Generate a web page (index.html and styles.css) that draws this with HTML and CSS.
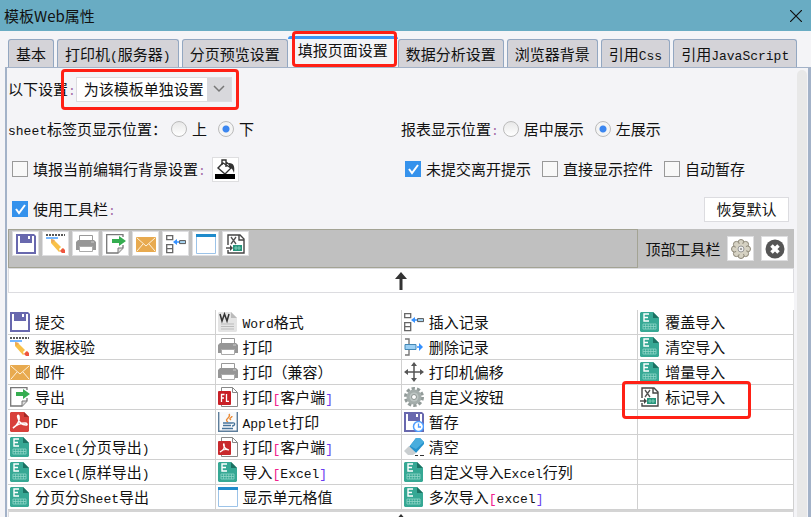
FILE: index.html
```html
<!DOCTYPE html>
<html lang="zh-CN">
<head>
    <meta charset="UTF-8">
    <meta name="viewport" content="width=device-width, initial-scale=1.0">
    <title>模板Web属性</title>
    <link rel="stylesheet" href="styles.css">
</head>
<body>
    <!-- icon sprite -->
    <svg class="sprite" aria-hidden="true">
        <symbol id="i-save" viewBox="0 0 20 20">
            <path d="M0 0h18l2 2v18H0z" fill="#6868ae"/>
            <path d="M2 2h2v7h12V2h2v16H2z" fill="#fff"/>
            <path d="M4 0h12v8H4z" fill="#6868ae"/>
            <path d="M12 2h2v3h-2z" fill="#fff"/>
        </symbol>
        <symbol id="i-check" viewBox="0 0 20 20">
            <path d="M0 1h19" stroke="#222" stroke-width="1.5" stroke-dasharray="2 1"/>
            <path d="M0 4h12" stroke="#4aa0ff" stroke-width="1.5"/>
            <path d="M5 5l3 1 9 9-4 3-8-9z" fill="#f9c148"/>
            <path d="M5 5l4 1-3 3z" fill="#eaa65d"/>
            <path d="M13 15l3-3 1 1-3 4z" fill="#fff"/>
            <path d="M14 17l3-3 2 2v3h-3z" fill="#ee5540"/>
        </symbol>
        <symbol id="i-print" viewBox="0 0 20 20">
            <path d="M3.5 7V1.500h13V7" fill="#fff" stroke="#999"/>
            <path d="M2 6h16l2 2v8H0V8z" fill="#969696"/>
            <path d="M3.500 12.500h13v5h-13z" fill="#fff" stroke="#aaa"/>
            <path d="M15 8h3" stroke="#ccc"/>
        </symbol>
        <symbol id="i-export" viewBox="0 0 20 20">
            <path d="M17 11v3l-5 5H.7V.7H17V3" fill="#fff" stroke="#777" stroke-width="1.300"/>
            <path d="M12 19v-5h5" fill="#ddd" stroke="#777"/>
            <path d="M6 5h7V2l7 5-7 5V9H6z" fill="#35ad50"/>
        </symbol>
        <symbol id="i-mail" viewBox="0 0 20 20">
            <rect y="3" width="20" height="15" rx="1" fill="#e8aa4f"/>
            <path d="M1 4l9 8 9-8M1 17l6-7M19 17l-6-7" fill="none" stroke="#fff2dc"/>
        </symbol>
        <symbol id="i-insert" viewBox="0 0 20 20">
            <path d="M.7 1.700h6v4h-6zM.7 10.700h6v8h-6zM1 14.700h6" fill="#fff" stroke="#666" stroke-width="1.300"/>
            <path d="M13.600 6.600h6v3h-6z" fill="#a9d7f5" stroke="#555"/>
            <path d="M13 8H9" stroke="#3390ff" stroke-width="1.500"/>
            <path d="M7 8l4-3v6z" fill="#3390ff"/>
        </symbol>
        <symbol id="i-delete" viewBox="0 0 20 20">
            <path d="M1 2h4v16H1" fill="none" stroke="#777" stroke-width="1.400"/>
            <path d="M1 7.500h11v5H1z" fill="#9bd0f5" stroke="#4488b5"/>
            <path d="M13 10h4" stroke="#3390ff" stroke-width="1.500"/>
            <path d="M15 6l4 4-4 4z" fill="#3390ff"/>
        </symbol>
        <symbol id="i-window" viewBox="0 0 20 20">
            <path d="M.5.5h19v19H.5z" fill="#fff" stroke="#9cc3e8"/>
            <path d="M0 0h20v3H0z" fill="#1f8bcb"/>
        </symbol>
        <symbol id="i-mark" viewBox="0 0 20 20">
            <path d="M2 11V1h12l4 4v14H2v-3" fill="#fff" stroke="#444" stroke-width="1.400"/>
            <path d="M13 1v5h5" fill="none" stroke="#444" stroke-width="1.400"/>
            <path d="M5 3l5 7M10 3l-5 7" stroke="#555" stroke-width="1.300"/>
            <path d="M0 14h5" stroke="#444" stroke-width="1.400"/>
            <path d="M4 11l3 3-3 3z" fill="#444"/>
            <path d="M7 11h9v6H7z" fill="#27947c"/>
            <path d="M8 14h7M10 12v4M13 12v4" stroke="#9adcc9" stroke-width=".7"/>
        </symbol>
        <symbol id="i-pdf" viewBox="0 0 20 20">
            <path d="M1 0h13l5 5v14l-1 1H1l-1-1V1z" fill="#d8403b"/>
            <path d="M14 0l5 5h-5z" fill="#a32a27"/>
            <path d="M3 16c5-3 7-8 6-12-1-2-2 0-1 2 1 4 4 7 8 7 2 0 1-2-1-2-5 0-9 2-12 5z" fill="none" stroke="#fff" stroke-width="1.500"/>
        </symbol>
        <symbol id="i-excel" viewBox="0 0 20 20">
            <path d="M1 0h12l6 6v13l-1 1H1l-1-1V1z" fill="#36a894"/>
            <path d="M13 0l6 6h-6z" fill="#1c7263"/>
            <path d="M9 2H4v7h5M4 5.500h4" fill="none" stroke="#fff" stroke-width="1.400"/>
            <path d="M3 12h13v5H3zM3 14.500h13M5.600 12v5M8.200 12v5M10.800 12v5M13.400 12v5" fill="none" stroke="#91d6c8" stroke-width=".8"/>
        </symbol>
        <symbol id="i-word" viewBox="0 0 20 20">
            <path d="M1 0h12l6 6v13l-1 1H1l-1-1V1z" fill="#e4e4e4"/>
            <path d="M13 0l6 6h-6z" fill="#bbb"/>
            <path d="M2 2l2 7 2.500-7L9 9l2-7" fill="none" stroke="#333" stroke-width="1.500"/>
            <path d="M3 12h13M3 14.500h13M3 17h13" stroke="#bbb"/>
        </symbol>
        <symbol id="i-flash" viewBox="0 0 20 20">
            <path d="M3.500.500h11l5 5v14h-16z" fill="#fff" stroke="#888"/>
            <path d="M14.500.500v5h5" fill="none" stroke="#888"/>
            <rect y="4" width="13" height="14" rx="1" fill="#c81f26"/>
            <path d="M6.500 7.500H3.500V15M3.500 11H6M8.500 7v7.300H11" fill="none" stroke="#fff" stroke-width="1.300"/>
        </symbol>
        <symbol id="i-pdfprint" viewBox="0 0 20 20">
            <path d="M3.500.500h11l5 5v14h-16z" fill="#fff" stroke="#888"/>
            <path d="M14.500.500v5h5" fill="none" stroke="#888"/>
            <rect y="4" width="13" height="14" rx="1" fill="#c8282c"/>
            <path d="M2 15c4-2 5-5 4-8-1-1-1 5 5 6-3-1-7 0-9 2z" fill="none" stroke="#fff" stroke-width="1.200"/>
        </symbol>
        <symbol id="i-java" viewBox="0 0 20 20">
            <path d="M.700 0v19.300h18.600V0" fill="#f8fafc" stroke="#5c7d9b" stroke-width="1.400"/>
            <path d="M10 10c-5-3 4-4 1-8M13 8c-3-2 1-2 1-4" fill="none" stroke="#ea8a35" stroke-width="1.400"/>
            <path d="M5 11h9M5 13.500h8M4 16.500h11M14 11c4-1 3 3 0 3" fill="none" stroke="#47749a" stroke-width="1.300"/>
        </symbol>
        <symbol id="i-move" viewBox="0 0 20 20">
            <path d="M10 2v16M2 10h16" stroke="#555" stroke-width="1.500"/>
            <path d="M10 0l3 4H7zM10 20l3-4H7zM0 10l4-3v6zM20 10l-4-3v6z" fill="#555"/>
        </symbol>
        <symbol id="i-gear" viewBox="0 0 20 20">
            <circle cx="10" cy="10" r="8.500" fill="none" stroke="#929b99" stroke-width="3" stroke-dasharray="3.300 2.040"/>
            <circle cx="10" cy="10" r="7.500" fill="#a4adab"/>
            <circle cx="10" cy="10" r="4.500" fill="#bcc4c2"/>
            <circle cx="10" cy="10" r="2.500" fill="#fff" stroke="#8b9391"/>
        </symbol>
        <symbol id="i-stash" viewBox="0 0 20 20">
            <use href="#i-save"/>
            <circle cx="14.500" cy="14.500" r="5" fill="#fff" stroke="#4d9dff" stroke-width="1.500"/>
            <path d="M14.500 11.500v3.500H17" fill="none" stroke="#4d9dff" stroke-width="1.300"/>
        </symbol>
        <symbol id="i-erase" viewBox="0 0 20 20">
            <path d="M12 1h4l4 4v2l-8 9-7-6z" fill="#2492cc"/>
            <path d="M12 1h4l4 4-8 7-6-3z" fill="#48addd"/>
            <path d="M5 9l7 7-3 2H4l-4-4z" fill="#c9ced0"/>
            <path d="M11 18.500h3M16 18.500h4" stroke="#333"/>
        </symbol>
        <symbol id="i-fill" viewBox="0 0 20 20">
            <path d="M8 4l8 5-6 6-7-6z" fill="#fff" stroke="#333" stroke-width="1.400"/>
            <path d="M7 6V1h4v7M11 3l4 3" fill="none" stroke="#333" stroke-width="1.400"/>
            <path d="M14 4c5 0 6 4 5 10-1-3-2-5-5-6z" fill="#333"/>
            <path d="M0 15h20v5H0z"/>
        </symbol>
        <symbol id="i-flower" viewBox="0 0 20 20">
            <g fill="#d6d2c3" stroke="#8d8878">
                <circle cx="10" cy="3.500" r="3"/>
                <circle cx="14.600" cy="5.400" r="3"/>
                <circle cx="16.500" cy="10" r="3"/>
                <circle cx="14.600" cy="14.600" r="3"/>
                <circle cx="10" cy="16.500" r="3"/>
                <circle cx="5.400" cy="14.600" r="3"/>
                <circle cx="3.500" cy="10" r="3"/>
                <circle cx="5.400" cy="5.400" r="3"/>
            </g>
            <circle cx="10" cy="10" r="5.500" fill="#d6d2c3"/>
            <circle cx="10" cy="10" r="3" fill="#eee" stroke="#999"/>
            <circle cx="10" cy="10" r="1" fill="#888"/>
        </symbol>
        <symbol id="i-remove" viewBox="0 0 20 20">
            <circle cx="10" cy="10" r="9.500" fill="#555"/>
            <path d="M6.500 6.500l7 7M13.500 6.500l-7 7" stroke="#fff" stroke-width="3.500"/>
        </symbol>
        <symbol id="i-up" viewBox="0 0 12 18">
            <path d="M6 0l6 7H7.500v11h-3V7H0z" fill="#333"/>
        </symbol>
    </svg>

    <header class="titlebar">
        <h1>模板Web属性</h1>
        <button class="close" type="button" aria-label="关闭">
            <svg viewBox="0 0 12 12"><path d="M0 0l12 12M12 0L0 12" stroke="#111" stroke-width="1.200"/></svg>
        </button>
    </header>

    <nav class="tabs">
        <button type="button" class="tab">基本</button>
        <button type="button" class="tab">打印机<span class="en">(</span>服务器<span class="en">)</span></button>
        <button type="button" class="tab">分页预览设置</button>
        <button type="button" class="tab active marked">填报页面设置</button>
        <button type="button" class="tab">数据分析设置</button>
        <button type="button" class="tab">浏览器背景</button>
        <button type="button" class="tab">引用<span class="en">Css</span></button>
        <button type="button" class="tab">引用<span class="en">JavaScript</span></button>
    </nav>

    <main class="panel">
        <div class="content">
            <form class="settings">
                <div class="row">
                    <label for="scope">以下设置<span class="en colon">:</span></label>
                    <div class="combo marked">
                        <select id="scope">
                            <option>为该模板单独设置</option>
                        </select>
                        <svg class="chevron" viewBox="0 0 12 12"><path d="M1 3l5 5 5-5" fill="none" stroke="#777" stroke-width="1.500"/></svg>
                    </div>
                </div>
                <div class="row split">
                    <div class="group">
                        <span class="caption"><span class="en">sheet</span>标签页显示位置：</span>
                        <label class="radio"><input type="radio" name="sheet">上</label>
                        <label class="radio"><input type="radio" name="sheet" checked>下</label>
                    </div>
                    <div class="group">
                        <span class="caption">报表显示位置<span class="en colon">:</span></span>
                        <label class="radio"><input type="radio" name="report">居中展示</label>
                        <label class="radio"><input type="radio" name="report" checked>左展示</label>
                    </div>
                </div>
                <div class="row split">
                    <div class="group inset tight">
                        <label class="check"><input type="checkbox"><span>填报当前编辑行背景设置<span class="en colon">:</span></span></label>
                        <button class="icon-btn" type="button" aria-label="背景颜色"><svg class="icon"><use href="#i-fill"/></svg></button>
                    </div>
                    <div class="group inset">
                        <label class="check"><input type="checkbox" checked>未提交离开提示</label>
                        <label class="check"><input type="checkbox">直接显示控件</label>
                        <label class="check"><input type="checkbox">自动暂存</label>
                    </div>
                </div>
                <div class="row between">
                    <div class="group inset">
                        <label class="check"><input type="checkbox" checked><span>使用工具栏<span class="en colon">:</span></span></label>
                    </div>
                    <button class="reset" type="button">恢复默认</button>
                </div>
            </form>

            <section class="toolbar">
                <div class="tools">
                    <button class="icon-btn" type="button" aria-label="提交"><svg class="icon"><use href="#i-save"/></svg></button>
                    <button class="icon-btn" type="button" aria-label="数据校验"><svg class="icon"><use href="#i-check"/></svg></button>
                    <button class="icon-btn" type="button" aria-label="打印"><svg class="icon"><use href="#i-print"/></svg></button>
                    <button class="icon-btn" type="button" aria-label="导出"><svg class="icon"><use href="#i-export"/></svg></button>
                    <button class="icon-btn" type="button" aria-label="邮件"><svg class="icon"><use href="#i-mail"/></svg></button>
                    <button class="icon-btn" type="button" aria-label="插入记录"><svg class="icon"><use href="#i-insert"/></svg></button>
                    <button class="icon-btn" type="button" aria-label="显示单元格值"><svg class="icon"><use href="#i-window"/></svg></button>
                    <button class="icon-btn" type="button" aria-label="标记导入"><svg class="icon"><use href="#i-mark"/></svg></button>
                </div>
                <div class="toolbar-side">
                    <span>顶部工具栏</span>
                    <button class="icon-btn" type="button" aria-label="设置"><svg class="icon"><use href="#i-flower"/></svg></button>
                    <button class="icon-btn" type="button" aria-label="删除"><svg class="icon"><use href="#i-remove"/></svg></button>
                </div>
            </section>

            <div class="strip"><svg class="up"><use href="#i-up"/></svg></div>

            <table class="actions">
                <colgroup>
                    <col class="c1"><col class="c2"><col class="c3"><col class="c4">
                </colgroup>
                <tbody>
                    <tr>
                        <td><div class="item"><svg class="icon"><use href="#i-save"/></svg><span>提交</span></div></td>
                        <td><div class="item"><svg class="icon"><use href="#i-word"/></svg><span><span class="en">Word</span>格式</span></div></td>
                        <td><div class="item"><svg class="icon"><use href="#i-insert"/></svg><span>插入记录</span></div></td>
                        <td><div class="item"><svg class="icon"><use href="#i-excel"/></svg><span>覆盖导入</span></div></td>
                    </tr>
                    <tr>
                        <td><div class="item"><svg class="icon"><use href="#i-check"/></svg><span>数据校验</span></div></td>
                        <td><div class="item"><svg class="icon"><use href="#i-print"/></svg><span>打印</span></div></td>
                        <td><div class="item"><svg class="icon"><use href="#i-delete"/></svg><span>删除记录</span></div></td>
                        <td><div class="item"><svg class="icon"><use href="#i-excel"/></svg><span>清空导入</span></div></td>
                    </tr>
                    <tr>
                        <td><div class="item"><svg class="icon"><use href="#i-mail"/></svg><span>邮件</span></div></td>
                        <td><div class="item"><svg class="icon"><use href="#i-print"/></svg><span>打印（兼容）</span></div></td>
                        <td><div class="item"><svg class="icon"><use href="#i-move"/></svg><span>打印机偏移</span></div></td>
                        <td><div class="item"><svg class="icon"><use href="#i-excel"/></svg><span>增量导入</span></div></td>
                    </tr>
                    <tr>
                        <td><div class="item"><svg class="icon"><use href="#i-export"/></svg><span>导出</span></div></td>
                        <td><div class="item"><svg class="icon"><use href="#i-flash"/></svg><span>打印<span class="en open">[</span>客户端<span class="en shut">]</span></span></div></td>
                        <td><div class="item"><svg class="icon"><use href="#i-gear"/></svg><span>自定义按钮</span></div></td>
                        <td><div class="item marked"><svg class="icon"><use href="#i-mark"/></svg><span>标记导入</span></div></td>
                    </tr>
                    <tr>
                        <td><div class="item"><svg class="icon"><use href="#i-pdf"/></svg><span><span class="en">PDF</span></span></div></td>
                        <td><div class="item"><svg class="icon"><use href="#i-java"/></svg><span><span class="en">Applet</span>打印</span></div></td>
                        <td><div class="item"><svg class="icon"><use href="#i-stash"/></svg><span>暂存</span></div></td>
                        <td></td>
                    </tr>
                    <tr>
                        <td><div class="item"><svg class="icon"><use href="#i-excel"/></svg><span><span class="en">Excel(</span>分页导出<span class="en">)</span></span></div></td>
                        <td><div class="item"><svg class="icon"><use href="#i-pdfprint"/></svg><span>打印<span class="en open">[</span>客户端<span class="en shut">]</span></span></div></td>
                        <td><div class="item"><svg class="icon"><use href="#i-erase"/></svg><span>清空</span></div></td>
                        <td></td>
                    </tr>
                    <tr>
                        <td><div class="item"><svg class="icon"><use href="#i-excel"/></svg><span><span class="en">Excel(</span>原样导出<span class="en">)</span></span></div></td>
                        <td><div class="item"><svg class="icon"><use href="#i-excel"/></svg><span>导入<span class="en open">[</span><span class="en">Excel</span><span class="en shut">]</span></span></div></td>
                        <td><div class="item"><svg class="icon"><use href="#i-excel"/></svg><span>自定义导入<span class="en">Excel</span>行列</span></div></td>
                        <td></td>
                    </tr>
                    <tr>
                        <td><div class="item"><svg class="icon"><use href="#i-excel"/></svg><span>分页分<span class="en">Sheet</span>导出</span></div></td>
                        <td><div class="item"><svg class="icon"><use href="#i-window"/></svg><span>显示单元格值</span></div></td>
                        <td><div class="item"><svg class="icon"><use href="#i-excel"/></svg><span>多次导入<span class="en open">[</span><span class="en">excel</span><span class="en shut">]</span></span></div></td>
                        <td></td>
                    </tr>
                </tbody>
            </table>

            <div class="strip bottom"><svg class="up"><use href="#i-up"/></svg></div>
        </div>
        <div class="scrollbar"></div>
    </main>
</body>
</html>
```

FILE: styles.css
```css
* {
    box-sizing: border-box;
    margin: 0;
    padding: 0;
}

body {
    display: flex;
    flex-direction: column;
    height: 100vh;
    overflow: hidden;
    background-color: #f4f4f7;
    color: #111;
    font-family: "Noto Sans CJK SC", sans-serif;
    font-size: 15px;
    line-height: 20px;
}

button,
select,
input {
    font: inherit;
    color: inherit;
}

svg {
    display: block;
    flex: none;
}

.sprite {
    position: absolute;
    width: 0;
    height: 0;
}

.icon {
    width: 20px;
    height: 20px;
}

.en {
    font-family: "Liberation Mono", monospace;
    font-size: 13px;
    line-height: 1;
}

.colon {
    color: #a56aa8;
}

.open {
    color: #f0208c;
}

.shut {
    color: #6a3cf0;
}

/* Red highlight frame */
.marked {
    position: relative;
}

.marked::after {
    content: "";
    position: absolute;
    border: 3px solid #ff2015;
    border-radius: 4px;
    pointer-events: none;
}

/* Title bar */
.titlebar {
    flex: none;
    display: flex;
    align-items: center;
    justify-content: space-between;
    height: 31px;
    padding: 0 9px 0 4px;
    background-color: #69acc3;
}

.titlebar h1 {
    font-size: 15px;
    font-weight: normal;
}

.close {
    border: none;
    background: none;
}

.close svg {
    width: 12px;
    height: 12px;
}

/* Tabs */
.tabs {
    flex: none;
    display: flex;
    align-items: flex-end;
    gap: 3px;
    height: 36px;
    padding-left: 8px;
}

.tab {
    height: 28px;
    padding: 0 7px;
    border: 1px solid #93a7c1;
    border-bottom: none;
    border-radius: 3px 3px 0 0;
    background-color: #d4d3d8;
    white-space: nowrap;
}

.tab.active {
    height: 31px;
    margin: 0 -3px;
    padding: 0 10px 6px;
    border: none;
    border-top: 3px solid #3c96f5;
    background-color: #f4f4f7;
}

.tab.marked::after {
    inset: -8px 1px 0 4px;
}

/* Panel */
.panel {
    flex: 1;
    display: flex;
    min-height: 0;
    margin-left: 5px;
    border: 2px solid #a3b2c8;
    border-width: 1px 3px 0 2px;
}

.content {
    flex: 1;
    min-width: 0;
    padding: 1px 0 0 1px;
    overflow: hidden;
}

.scrollbar {
    flex: none;
    width: 10px;
    margin: 2px 1px 0 3px;
    border-radius: 5px 5px 0 0;
    background-color: #e8e8e8;
}

/* Settings */
.row {
    display: flex;
    align-items: center;
    height: 40px;
}

.split {
    display: grid;
    grid-template-columns: 1fr 1fr;
}

.between {
    justify-content: space-between;
    padding-right: 5px;
}

.group {
    display: flex;
    align-items: center;
    gap: 11px;
    white-space: nowrap;
}

.group.inset {
    padding-left: 4px;
}

.group.tight {
    gap: 6px;
}

.caption {
    margin-right: -7px;
}

.combo {
    display: grid;
    grid-template-columns: 1fr 24px;
    align-items: center;
    width: 156px;
    height: 25px;
    border: 1px solid #dcdce0;
    background-color: #d8d8dc;
}

.combo select {
    grid-area: 1 / 1 / 2 / 3;
    height: 23px;
    padding-left: 7px;
    appearance: none;
    border: none;
    background: linear-gradient(#fff, #fff) left / calc(100% - 24px) 100% no-repeat;
}

.chevron {
    grid-area: 1 / 2 / 2 / 3;
    justify-self: center;
    width: 12px;
    height: 12px;
    pointer-events: none;
}

.combo.marked::after {
    inset: -9px -8px -9px -16px;
}

.radio,
.check {
    display: flex;
    align-items: center;
    gap: 5px;
}

.radio input,
.check input {
    flex: none;
    width: 16px;
    height: 16px;
    appearance: none;
    border: 1px solid #999;
    background-color: #f8f8f8;
}

.radio input {
    border-color: #bbb;
    border-radius: 50%;
    background-image: linear-gradient(#e8e8e8, #fff);
}

.radio input:checked {
    background-image: radial-gradient(circle, #3b86f0 3px, #f4f4f4 4px);
}

.check input:checked {
    border-color: #3592ec;
    background: #3592ec url('data:image/svg+xml,<svg xmlns="http://www.w3.org/2000/svg" viewBox="0 0 14 14"><path d="M3 7l3 4 6-8" fill="none" stroke="white" stroke-width="2"/></svg>') center / 14px 14px;
}

.icon-btn {
    display: flex;
    align-items: center;
    justify-content: center;
    width: 27px;
    height: 25px;
    border: 1px solid #dedee0;
    background-color: #fff;
}

.reset {
    width: 85px;
    height: 25px;
    border: 1px solid #dcdce0;
    background-color: #fff;
}

/* Toolbar */
.toolbar {
    display: flex;
    height: 39px;
    background-color: #c0c0c0;
}

.tools {
    flex: 1;
    display: flex;
    gap: 3px;
    padding: 1px 3px;
    border: 1px solid #a3a394;
}

.toolbar-side {
    display: flex;
    align-items: center;
    gap: 7px;
    width: 19.8%;
    padding-left: 7px;
}

.strip {
    display: flex;
    justify-content: center;
    align-items: center;
    height: 25px;
    border: 1px solid #dcdce0;
    background-color: #fff;
}

.strip.bottom {
    border-top: 2px solid #d4d4d4;
}

.up {
    width: 12px;
    height: 18px;
}

/* Action list */
.actions {
    width: 100%;
    table-layout: fixed;
    border-spacing: 0;
    border-top: 17px solid #fff;
    background-color: #fff;
}

.c1 {
    width: 26.4%;
}

.c2 {
    width: 23.7%;
}

.c3 {
    width: 30.1%;
}

.c4 {
    width: 19.8%;
}

.actions td {
    height: 25px;
    padding-left: 2px;
    border-right: 1px solid #d0d0d0;
    border-bottom: 1px solid #d0d0d0;
}

.item {
    display: flex;
    align-items: center;
    gap: 5px;
    height: 24px;
    white-space: nowrap;
}

.item.marked::after {
    inset: -4px 42px -10px -18px;
}
```
